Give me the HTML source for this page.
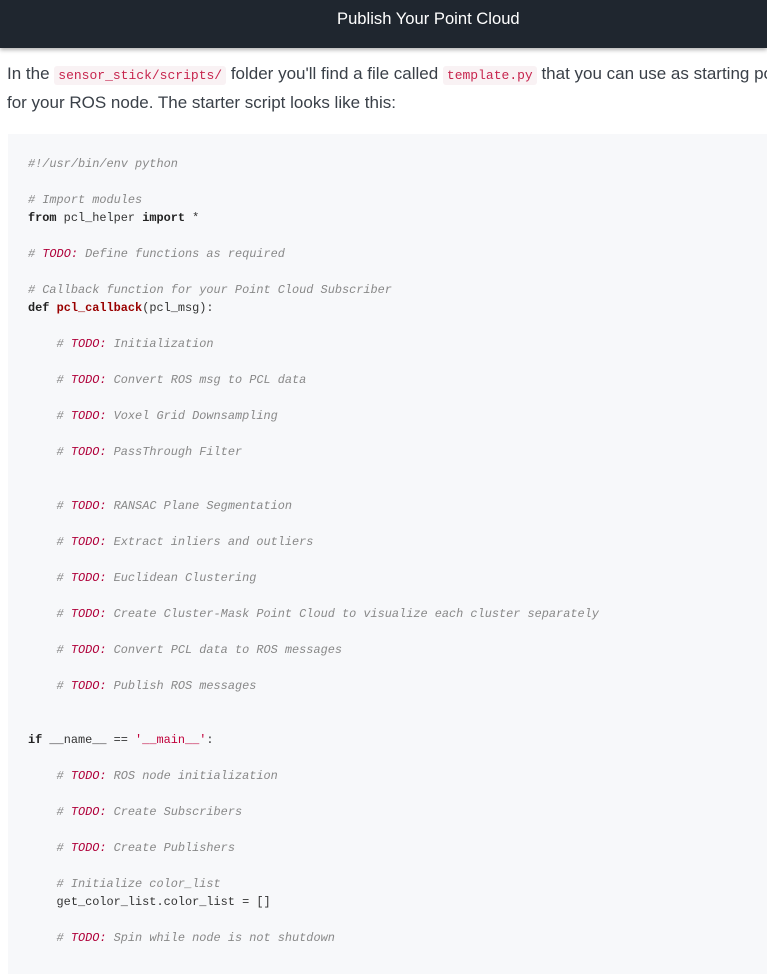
<!DOCTYPE html>
<html><head><meta charset="utf-8"><style>
body{margin:0;background:#fff;width:767px;height:954px;overflow:hidden;font-family:"Liberation Sans",sans-serif;}
.hdr{height:48px;background:#1f262f;color:#fff;text-align:center;font-size:16.6px;line-height:38px;box-shadow:0 2px 4px rgba(0,0,0,.3);position:relative;}
.hdr span{position:absolute;left:337px;top:0}
p{margin:0;position:absolute;left:7px;top:60px;width:900px;font-size:17px;line-height:27px;color:#3a4048;white-space:nowrap}
code.i{font-family:"Liberation Mono",monospace;font-size:13px;color:#c7254e;background:#f9f2f4;padding:2px 4px;border-radius:3px}
pre{position:absolute;left:8px;top:134px;width:780px;height:840px;margin:0;background:#f7f8fa;padding:21px 20px;box-sizing:border-box;font-family:"Liberation Mono",monospace;font-size:11.9px;line-height:18px;color:#333}
.c{color:#888;font-style:italic}.t{color:#b0003a;font-weight:normal}.k{font-weight:bold;color:#222}.f{font-weight:bold;color:#900}.s{color:#c0003a}
</style></head><body>
<div class="hdr"><span>Publish Your Point Cloud</span></div>
<p>In the <code class="i">sensor_stick/scripts/</code> folder you'll find a file called <code class="i">template.py</code> that you can use as starting point<br>for your ROS node. The starter script looks like this:</p>
<pre><span class="c">#!/usr/bin/env python</span>

<span class="c"># Import modules</span>
<span class="k">from</span> pcl_helper <span class="k">import</span> *

<span class="c"># <span class="t">TODO:</span> Define functions as required</span>

<span class="c"># Callback function for your Point Cloud Subscriber</span>
<span class="k">def</span> <span class="f">pcl_callback</span>(pcl_msg):

    <span class="c"># <span class="t">TODO:</span> Initialization</span>

    <span class="c"># <span class="t">TODO:</span> Convert ROS msg to PCL data</span>

    <span class="c"># <span class="t">TODO:</span> Voxel Grid Downsampling</span>

    <span class="c"># <span class="t">TODO:</span> PassThrough Filter</span>


    <span class="c"># <span class="t">TODO:</span> RANSAC Plane Segmentation</span>

    <span class="c"># <span class="t">TODO:</span> Extract inliers and outliers</span>

    <span class="c"># <span class="t">TODO:</span> Euclidean Clustering</span>

    <span class="c"># <span class="t">TODO:</span> Create Cluster-Mask Point Cloud to visualize each cluster separately</span>

    <span class="c"># <span class="t">TODO:</span> Convert PCL data to ROS messages</span>

    <span class="c"># <span class="t">TODO:</span> Publish ROS messages</span>


<span class="k">if</span> __name__ == <span class="s">'__main__'</span>:

    <span class="c"># <span class="t">TODO:</span> ROS node initialization</span>

    <span class="c"># <span class="t">TODO:</span> Create Subscribers</span>

    <span class="c"># <span class="t">TODO:</span> Create Publishers</span>

    <span class="c"># Initialize color_list</span>
    get_color_list.color_list = []

    <span class="c"># <span class="t">TODO:</span> Spin while node is not shutdown</span>
</pre>
</body></html>
